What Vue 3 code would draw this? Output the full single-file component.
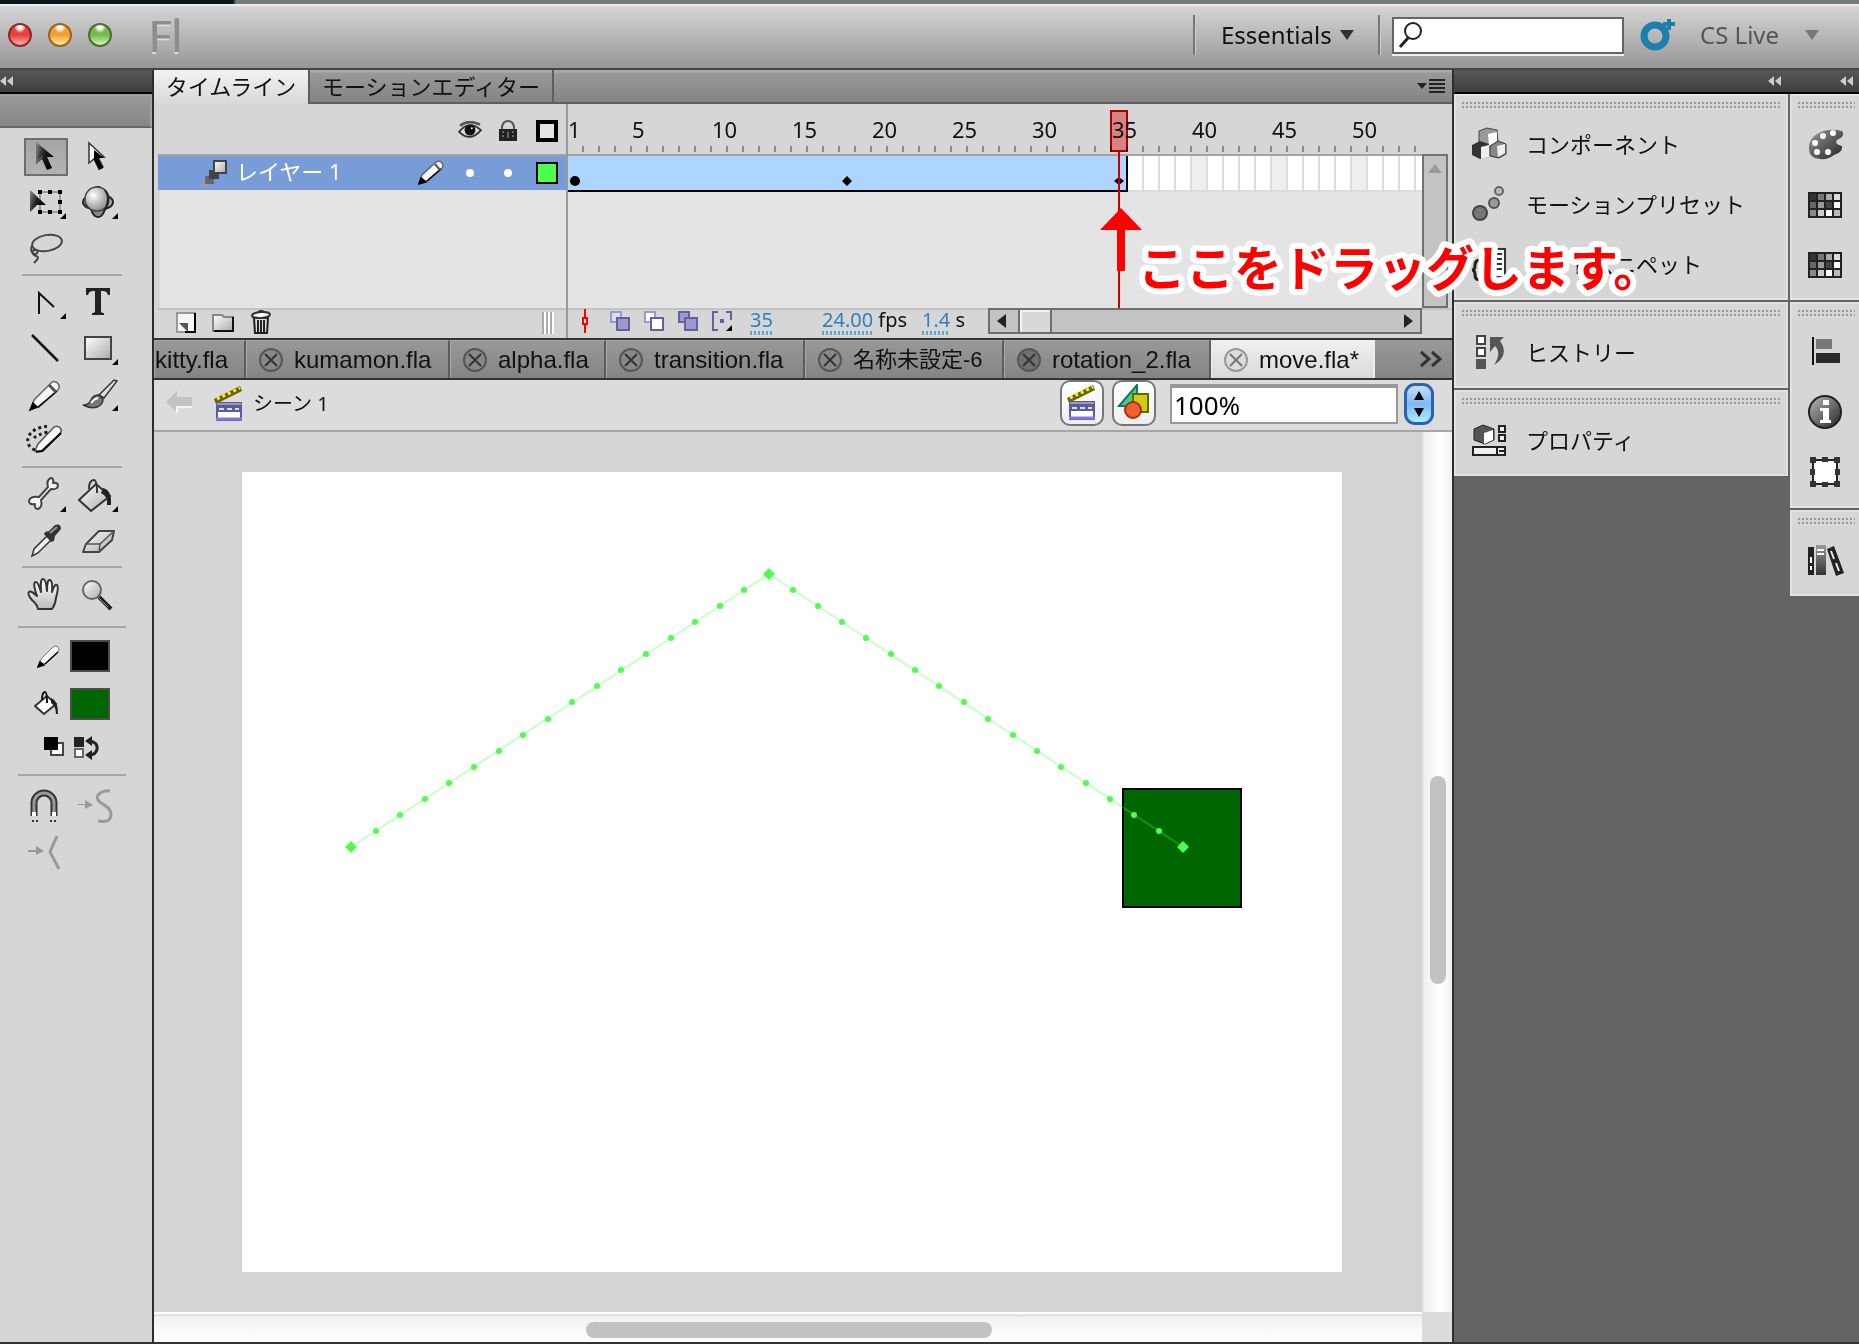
<script setup>
import { ref } from 'vue'

const zoom = ref('100%')
const query = ref('')

const flyout = (x, y) => `<path d="M${x + 6} ${y}v6h-6z" fill="#000"/>`

const toolGroups = [
  [
    { name: 'Selection', x: 24, y: 134, active: true, art: '<path d="M36 142v22l6-5 5 11 5-2-5-11h7z" fill="url(#arrowDark)"/><path d="M37 144v18l6-6" fill="none" stroke="#777"/>' },
    { name: 'Subselection', x: 76, y: 134, art: '<path d="M89 143v20l5-4 5 10 4-2-5-10h6z" fill="#fff" stroke="#333" stroke-width="1.5"/><path d="M94 150l10 8h-6l5 10-4 2-5-11z" fill="#000"/>' },
    { name: 'Free Transform', x: 24, y: 180, art: '<path d="M40 192h20v20H40z" fill="none" stroke="#999" stroke-width="2"/><path d="M38 190h4v4h-4zM48 190h4v4h-4zM58 190h4v4h-4zM58 200h4v4h-4zM58 210h4v4h-4zM48 210h4v4h-4zM38 210h4v4h-4z" fill="#000"/><path d="M30 190v22l7-7h9z" fill="url(#arrowDark)"/>' + flyout(60, 213) },
    { name: '3D Rotation', x: 76, y: 180, art: '<ellipse cx="98" cy="202" rx="8" ry="15" fill="#888" stroke="#222" stroke-width="2"/><ellipse cx="98" cy="202" rx="15" ry="8" fill="#aaa" stroke="#222" stroke-width="2"/><circle cx="97" cy="199" r="12" fill="url(#ball)" stroke="#444" stroke-width="1.5"/><path d="M105 190q6 8 0 20" fill="none" stroke="#222" stroke-width="2"/>' + flyout(112, 213) },
    { name: 'Lasso', x: 24, y: 226, art: '<ellipse cx="47" cy="243" rx="15" ry="8" transform="rotate(-10 47 243)" fill="none" stroke="#444" stroke-width="2"/><path d="M32 246c-2 4 0 8 3 8s4-4 0-4-3 5 1 6 1 4-2 7" fill="none" stroke="#444" stroke-width="2"/>' },
  ],
  [
    { name: 'Pen', x: 24, y: 280, art: '<path d="M39 314v-21l15 14" fill="none" stroke="#111" stroke-width="2"/>' + flyout(60, 313) },
    { name: 'Text', x: 76, y: 280, art: '<path d="M86 288h24v7h-2q-1-4-5-4h-2v20q0 2 3 2v2H92v-2q3 0 3-2v-20h-2q-4 0-5 4h-2z" fill="#222"/>' },
    { name: 'Line', x: 24, y: 326, art: '<path d="M32 335l26 26" stroke="#111" stroke-width="2.5"/>' },
    { name: 'Rectangle', x: 76, y: 326, art: '<path d="M85 337h26v22H85z" fill="url(#shine)" stroke="#444" stroke-width="2"/>' + flyout(112, 359) },
    { name: 'Pencil', x: 24, y: 372, art: '<path d="M31 409l3-9 18-18q4-2 7 3 1 3-2 6l-18 16z" fill="#f6f6f6" stroke="#666" stroke-width="1.5"/><path d="M30 410l3-7 4 4zM38 407l19-16" fill="#000" stroke="#000" stroke-width="1.5"/><path d="M49 385l7 7" stroke="#555" stroke-width="3"/>' },
    { name: 'Brush', x: 76, y: 372, art: '<path d="M99 395l15-15 3 1-13 17z" fill="#ddd" stroke="#333" stroke-width="1.5"/><path d="M83 405q6 0 8-5t8-5l4 4q0 6-6 8t-14-2z" fill="#777" stroke="#333" stroke-width="1.5"/><path d="M91 403q3-4 7-5" stroke="#fff" stroke-width="2" fill="none"/>' + flyout(112, 405) },
    { name: 'Deco', x: 24, y: 418, art: '<path d="M35 451l3-7 16-17q4-2 7 2 1 3-2 6l-16 16z" fill="#f6f6f6" stroke="#555" stroke-width="1.5"/><path d="M36 452l6-1 19-18" fill="none" stroke="#000" stroke-width="2"/><path d="M35 450a10 10 0 0 1-7-12q4-11 22-12M34 438q4-4 15-6" fill="none" stroke="#222" stroke-width="3" stroke-dasharray="3 3"/>' },
  ],
  [
    { name: 'Bone', x: 24, y: 471, art: '<path d="M39 496l9-10q-2-7 3-9 3 0 2 5 4-1 5 2 0 5-7 4L41 499q2 7-3 9-4 0-3-5-6 1-6-3 1-5 10-4z" fill="#f4f4f4" stroke="#444" stroke-width="2" stroke-linejoin="round"/>' + flyout(60, 505) },
    { name: 'Paint Bucket', x: 76, y: 471, art: '<path d="M79 499l17-16 14 12-19 15z" fill="url(#shine)" stroke="#333" stroke-width="2"/><path d="M89 488q0-9 5-9 3 0 3 13" fill="none" stroke="#333" stroke-width="2"/><path d="M103 487q9 2 8 17h-4q1-9-6-12z" fill="#222"/>' + flyout(112, 505) },
    { name: 'Eyedropper', x: 24, y: 517, art: '<path d="M32 555l2-7 13-13 4 4-13 13z" fill="#eee" stroke="#333" stroke-width="1.5"/><path d="M45 531l4-1 6-6q6-2 6 4l-6 7-1 5-3 1-7-8z" fill="#333"/><path d="M50 532l7-6" stroke="#999" stroke-width="2"/>' },
    { name: 'Eraser', x: 76, y: 517, art: '<path d="M83 551l3-8 13-13h15l-2 9-13 12z" fill="url(#shine)" stroke="#444" stroke-width="2" stroke-linejoin="round"/><path d="M86 543h14l13-12M100 543l-1 8" fill="none" stroke="#555" stroke-width="1.5"/>' },
  ],
  [
    { name: 'Hand', x: 24, y: 571, art: '<path d="M38 609q-1-5-6-9-5-6-3-8t8 4q-5-14-1-14 2 0 5 10-1-13 2-13t4 12q0-12 3-11t2 12q3-9 5-7t-1 13q-1 7-4 11z" fill="url(#hand)" stroke="#333" stroke-width="2" stroke-linejoin="round"/>' },
    { name: 'Zoom', x: 76, y: 571, art: '<circle cx="92" cy="590" r="9" fill="url(#shine)" stroke="#666" stroke-width="2"/><path d="M99 597l12 12" stroke="#222" stroke-width="4"/><path d="M99 598l9 9" stroke="#999" stroke-width="1"/>' },
  ],
]

const optionTools = [
  { name: 'Snap to Objects', x: 24, y: 784, art: '<path d="M34 816v-13a10 10 0 0 1 20 0v13" fill="none" stroke="#333" stroke-width="7"/><path d="M34 812v-9a10 10 0 0 1 20 0v9" fill="none" stroke="#999" stroke-width="3"/><path d="M34 812v4M54 812v4" stroke="#fff" stroke-width="4"/><path d="M32 820h2v2h-2zM36 820h2v2h-2zM50 820h2v2h-2zM54 820h2v2h-2z" fill="#333"/>' },
  { name: 'Smooth', x: 76, y: 784, art: '<path d="M78 804h7v-4l8 5-8 4v-4h-7z" fill="#999"/><path d="M110 791c-8-1-15 4-12 9s13 6 13 14-6 8-13 7" fill="none" stroke="#999" stroke-width="3"/>' },
  { name: 'Straighten', x: 24, y: 830, art: '<path d="M28 850h8v-4l8 5-8 4v-3h-8z" fill="#999"/><path d="M57 836l-7 16 9 17" fill="none" stroke="#999" stroke-width="3"/>' },
]

const frames = Array.from({ length: 54 }, (_, i) => i + 1)
const isLabelled = (n) => n === 1 || (n % 5 === 0 && n <= 50)
const emptyFrames = frames.filter((n) => n > 35)

const docs = [
  { title: 'kumamon.fla' },
  { title: 'alpha.fla' },
  { title: 'transition.fla' },
  { title: '名称未設定-6', cjk: true },
  { title: 'rotation_2.fla', dark: true },
  { title: 'move.fla*', active: true },
]

const start = [109, 375]
const apex = [527, 102]
const end = [941, 375]
const between = (a, b) =>
  Array.from({ length: 16 }, (_, i) => [
    Math.round(a[0] + ((b[0] - a[0]) * (i + 1)) / 17),
    Math.round(a[1] + ((b[1] - a[1]) * (i + 1)) / 17),
  ])
const pathDots = [...between(start, apex), ...between(apex, end)]

const swatchGrid = (() => {
  const shades = ['#333', '#777', '#aaa', '#ddd', '#666', '#999', '#444', '#fff', '#888', '#ccc', '#fff', '#bbb']
  return '<path d="M0 5h34v26H0z" fill="#222"/>' +
    shades.map((c, i) => `<path d="M${2 + (i % 4) * 8} ${7 + Math.floor(i / 4) * 8}h6v6h-6z" fill="${c}"/>`).join('')
})()

const panels = [
  [
    { label: 'コンポーネント', art: '<path d="M7 4l8-3 10 2 1 12-8 5-11-3z" fill="#999" stroke="#444"/><path d="M16 7l9-2v10l-8 4z" fill="#fff"/><path d="M0 18l8-4 9 3v13l-9 2-8-4z" fill="#333"/><path d="M9 20l8-2v12l-8 2z" fill="#eee"/><path d="M18 19l8-5 8 3v10l-7 4-9-2z" fill="#888" stroke="#333"/><path d="M25 19l8-2v9l-7 4z" fill="#eee"/>' },
    { label: 'モーションプリセット', art: '<circle cx="8" cy="26" r="7" fill="#777" stroke="#444" stroke-width="2"/><circle cx="22" cy="16" r="5" fill="#999" stroke="#555" stroke-width="2"/><circle cx="27" cy="4" r="4" fill="#bbb" stroke="#666" stroke-width="2"/>' },
    { label: 'コードスニペット', art: '<path d="M14 2h19v28H14z" fill="#fff" stroke="#333" stroke-width="2"/><path d="M18 7h12M18 12h12M18 17h12M18 22h12" stroke="#333" stroke-width="2"/><path d="M8 13q-5 0-5 5t-3 5q3 0 3 5t5 5" fill="none" stroke="#222" stroke-width="3"/>' },
  ],
  [
    { label: 'ヒストリー', art: '<path d="M5 1h8v8H5zM5 13h8v8H5z" fill="#fff" stroke="#444" stroke-width="2"/><path d="M4 24h10v10H4z" fill="#555"/><path d="M18 2h14l-4 4q10 14-6 24 8-12 1-19l-5 6z" fill="#555"/>' },
  ],
  [
    { label: 'プロパティ', art: '<path d="M2 6l9-4 11 4v11l-9 4-11-4z" fill="#555" stroke="#222"/><path d="M12 10l9-3v10l-9 4z" fill="#fff"/><path d="M27 3h6v6h-6zM27 12h6v6h-6zM1 24h32v8H1z" fill="#eee" stroke="#222" stroke-width="2"/><path d="M25 24v8M27 28h5" stroke="#222" stroke-width="2"/>' },
  ],
]

const dock = [
  [
    { label: 'Color', art: '<path d="M1 20C2 6 20 0 34 4q4 5-5 9-3 4 5 6 1 6-8 9-6 5-14 4Q0 31 1 20z" fill="url(#palette)"/><circle cx="25" cy="6" r="3" fill="#fff"/><circle cx="15" cy="9" r="3" fill="#fff"/><circle cx="7" cy="16" r="3" fill="#fff"/><circle cx="9" cy="25" r="3" fill="#fff"/><circle cx="20" cy="25" r="3" fill="#fff"/>' },
    { label: 'Swatches', art: swatchGrid },
    { label: 'Color sets', art: swatchGrid },
  ],
  [
    { label: 'Align', art: '<path d="M4 2h2v28H4z" fill="#111"/><path d="M8 4h16v10H8z" fill="#777"/><path d="M8 18h24v10H8z" fill="#2a2a2a"/>' },
    { label: 'Info', art: '<circle cx="17" cy="17" r="16" fill="url(#info)" stroke="#222" stroke-width="2"/><path d="M15 5h6v5h-6zM12 13h9v12h2v3H12v-3h3v-9h-3z" fill="#fff"/>' },
    { label: 'Transform', art: '<path d="M5 5h24v24H5z" fill="#fff" stroke="#222" stroke-width="2"/><path d="M2 2h6v6H2zM14 2h6v5h-6zM26 2h6v6h-6zM2 14h5v6H2zM27 14h5v6h-5zM2 26h6v6H2zM14 27h6v5h-6zM26 26h6v6h-6z" fill="#333"/>' },
  ],
  [
    { label: 'Library', art: '<path d="M0 4h6v28H0z" fill="#222"/><path d="M2 14h2v6H2zM2 23h2v4H2z" fill="#fff"/><path d="M8 2h10v30H8z" fill="url(#book)"/><path d="M9 6h7v2H9zM9 10h7v2H9z" fill="#fff"/><path d="M19 6l7-3 10 27-8 3z" fill="#222"/><path d="M23 8l3 8M28 20l3 8" stroke="#eee" stroke-width="2"/>' },
  ],
]

const pencil = '<path d="M1 23l3-8L18 2q4-2 6 1t0 5L9 21z" fill="#f6f6f6" stroke="#666" stroke-width="1.5"/><path d="M1 24l2-6 5 4zM9 21L23 9" fill="#000" stroke="#000" stroke-width="1.5"/><path d="M17 4l5 6" stroke="#555" stroke-width="2"/>'
const smallPencil = '<path d="M4 23l3-7L19 4q3-2 5 0t0 5L12 20z" fill="#f6f6f6" stroke="#777"/><path d="M4 24l2-5 4 3zM11 21L24 9" fill="#000" stroke="#000" stroke-width="1.5"/>'
const clapper = '<path d="M0 14L26 1l2 5L2 19z" fill="#6b6400"/><path d="M3 14L26 3" stroke="#ffee20" stroke-width="3" stroke-dasharray="3 3"/><path d="M3 18h24v17H3z" fill="#fff" stroke="#5a5aa0" stroke-width="2"/><path d="M3 17h24v10H3z" fill="#5c5c9c"/><path d="M3 19h24" stroke="#9a9ab0" stroke-width="2"/><path d="M5 24h5M13 24h5M21 24h4" stroke="#ddd" stroke-width="2"/><path d="M2 34h26" stroke="#7a7ae0" stroke-width="3"/>'
</script>

<template>
  <div class="app">
    <svg class="defs" aria-hidden="true">
      <defs>
        <linearGradient id="arrowDark" x1="0" y1="0" x2="1" y2="0.4"><stop offset="0" stop-color="#888" /><stop offset=".5" stop-color="#222" /><stop offset="1" stop-color="#000" /></linearGradient>
        <linearGradient id="palette" x1="0" y1="0" x2="1" y2="1"><stop offset="0" stop-color="#999" /><stop offset="1" stop-color="#222" /></linearGradient>
        <linearGradient id="shine" x1="0" y1="0" x2="1" y2="1"><stop offset="0" stop-color="#fff" /><stop offset="1" stop-color="#aaa" /></linearGradient>
        <linearGradient id="hand" x1="0" y1="0" x2="0" y2="1"><stop offset="0" stop-color="#fff" /><stop offset="1" stop-color="#bbb" /></linearGradient>
        <linearGradient id="book" x1="0" y1="0" x2="0" y2="1"><stop offset="0" stop-color="#999" /><stop offset="1" stop-color="#333" /></linearGradient>
        <linearGradient id="info" x1="0" y1="0" x2="1" y2="1"><stop offset="0" stop-color="#bbb" /><stop offset="1" stop-color="#222" /></linearGradient>
        <radialGradient id="ball" cx=".35" cy=".35" r=".7"><stop offset="0" stop-color="#fff" /><stop offset="1" stop-color="#888" /></radialGradient>
      </defs>
    </svg>

    <header class="titlebar">
      <div class="lights">
        <button class="light red" aria-label="Close"></button>
        <button class="light amber" aria-label="Minimize"></button>
        <button class="light green" aria-label="Zoom window"></button>
      </div>
      <span class="logo">Fl</span>
      <div class="title-tools">
        <button class="workspace">Essentials <i class="down"></i></button>
        <label class="search">
          <svg width="26" height="28" viewBox="0 0 26 28"><circle cx="15" cy="10" r="8" fill="none" stroke="#222" stroke-width="2" /><path d="M10 17l-8 9" stroke="#222" stroke-width="3" /></svg>
          <input v-model="query" type="text" aria-label="Search" />
        </label>
        <svg class="live-icon" width="36" height="34" viewBox="0 0 36 34"><circle cx="15" cy="18" r="11" fill="none" stroke="#1d80ac" stroke-width="7" /><path d="M29 1v11M23 6h12" stroke="#1d80ac" stroke-width="4" /></svg>
        <button class="live">CS Live <i class="down"></i></button>
      </div>
    </header>

    <div class="main">
      <aside class="toolbar">
        <div class="dark-head left"><svg width="14" height="10"><path d="M6 0v10L0 5zM13 0v10L7 5z" fill="#ccc" /></svg></div>
        <div class="tool-head"></div>
        <div v-for="(group, g) in toolGroups" :key="g" class="tools" :class="{ wide: g === 3 }">
          <button v-for="t in group" :key="t.name" class="tool" :class="{ active: t.active }" :aria-label="t.name">
            <svg width="44" height="46" :viewBox="`${t.x} ${t.y} 44 46`" v-html="t.art"></svg>
          </button>
        </div>
        <div class="colors">
          <div class="color-row">
            <svg width="26" height="26" viewBox="0 0 26 26" v-html="smallPencil"></svg>
            <button class="swatch black" aria-label="Stroke color"></button>
          </div>
          <div class="color-row">
            <svg width="26" height="26" viewBox="0 0 26 26"><path d="M1 15L13 5l9 8-12 10z" fill="#fff" stroke="#333" stroke-width="2" /><path d="M8 9q0-8 3-8 2 0 2 11" fill="none" stroke="#111" stroke-width="2" /><path d="M17 7q7 2 7 16h-2q0-8-5-11z" fill="#222" /></svg>
            <button class="swatch fill" aria-label="Fill color"></button>
          </div>
          <div class="color-row small">
            <svg width="22" height="24" viewBox="0 0 22 24"><path d="M7 7h12v12H7z" fill="#fff" stroke="#444" stroke-width="2" /><path d="M0 1h14v13H0z" fill="#000" /></svg>
            <svg width="26" height="24" viewBox="0 0 26 24"><path d="M0 1h10v10H0z" fill="#222" /><path d="M1 13h8v8H1z" fill="#fff" stroke="#666" stroke-width="2" /><path d="M15 5q9 1 8 8-1 6-8 6" fill="none" stroke="#222" stroke-width="3" /><path d="M11 5l7-5v10zM11 19l7-5v10z" fill="#222" /></svg>
          </div>
        </div>
        <div class="tools">
          <button v-for="t in optionTools" :key="t.name" class="tool" :aria-label="t.name">
            <svg width="44" height="46" :viewBox="`${t.x} ${t.y} 44 46`" v-html="t.art"></svg>
          </button>
        </div>
      </aside>

      <main class="center">
        <nav class="panel-tabs">
          <button class="panel-tab on">タイムライン</button>
          <button class="panel-tab">モーションエディター</button>
          <button class="panel-menu" aria-label="Panel menu"><svg width="28" height="18"><path d="M0 5h10l-5 6z" fill="#222" /><path d="M12 2h16M12 6h16M12 10h16M12 14h16" stroke="#222" stroke-width="2" /></svg></button>
        </nav>

        <section class="timeline">
          <div class="layers">
            <div class="layer-head">
              <svg width="24" height="20" viewBox="0 0 26 22"><path d="M1 12Q12-2 25 10 13 24 1 12z" fill="#ddd" stroke="#333" stroke-width="2" /><circle cx="13" cy="10" r="6" fill="#111" /><circle cx="15" cy="8" r="1" fill="#fff" /><path d="M2 5Q12-2 24 4" fill="none" stroke="#555" stroke-width="3" /></svg>
              <svg width="20" height="22" viewBox="0 0 20 22"><path d="M4 11V7q1-6 6-6t6 6v4" fill="none" stroke="#555" stroke-width="2" /><path d="M1 9h18v12H1z" fill="#222" /><path d="M10 12v6M4 12h2M14 12h2M4 16h2M14 16h2" stroke="#666" stroke-width="2" /></svg>
              <span class="outline-box"></span>
            </div>
            <div class="layer-row">
              <svg width="30" height="28" viewBox="0 0 30 28"><path d="M2 22h6v6H2z" fill="#99a" /><path d="M5 17h9v8H5z" fill="#667" /><path d="M9 11h10v9H9z" fill="#444" /><path d="M14 2h12v12H14z" fill="url(#shine)" stroke="#444" stroke-width="2" /></svg>
              <span class="layer-name">レイヤー 1</span>
              <svg width="26" height="26" viewBox="0 0 26 26" v-html="pencil"></svg>
              <span class="dot"></span>
              <span class="dot"></span>
              <span class="outline-box green-box"></span>
            </div>
            <div class="layer-space"></div>
            <div class="layer-foot">
              <button aria-label="New layer"><svg width="22" height="24" viewBox="0 0 22 24"><path d="M1 2h18v19H1z" fill="#f6f6f6" stroke="#999" stroke-width="2" /><path d="M19 2v19H9" fill="none" stroke="#000" stroke-width="2" /><path d="M3 12h9v9z" fill="#555" /></svg></button>
              <button aria-label="New folder"><svg width="24" height="24" viewBox="0 0 24 24"><path d="M1 4h9l2 2h9v14H1z" fill="url(#shine)" stroke="#888" stroke-width="2" /><path d="M2 20h19V6" fill="none" stroke="#111" stroke-width="2" /></svg></button>
              <button aria-label="Delete"><svg width="24" height="26" viewBox="0 0 24 26"><path d="M4 8h14l-1 15H5z" fill="#ddd" stroke="#222" stroke-width="2" /><path d="M8 10v12M11 10v12M14 10v12" stroke="#222" stroke-width="2" /><ellipse cx="11" cy="5" rx="9" ry="3" fill="#fff" stroke="#333" stroke-width="2" transform="rotate(-4 11 5)" /><path d="M8 3q2-4 6-1" fill="none" stroke="#333" stroke-width="2" /></svg></button>
              <span class="split-grip"></span>
            </div>
          </div>

          <div class="frames">
            <div class="ruler">
              <span v-for="n in frames" :key="n" class="tick"><template v-if="isLabelled(n)">{{ n }}</template></span>
            </div>
            <div class="frame-body">
              <div class="frame-area">
                <div class="frame-row">
                  <div class="span">
                    <svg width="560" height="32" viewBox="0 0 560 32"><circle cx="7" cy="25" r="5" /><path d="M274 25l5-5 5 5-5 5zM546 25l5-4 5 4-5 4z" /></svg>
                  </div>
                  <span v-for="n in emptyFrames" :key="n" class="cell" :class="{ fifth: n % 5 === 0 }"></span>
                </div>
              </div>
              <div class="vbar"><svg width="22" height="16"><path d="M11 2l7 9H4z" fill="#999" /></svg></div>
            </div>
            <div class="playhead"></div>
            <div class="needle"></div>
            <div class="frame-foot">
              <svg width="14" height="24" viewBox="0 0 14 24"><path d="M5 0v24" stroke="red" stroke-width="2" /><path d="M3 9h4v6H3z" fill="#fff" stroke="red" stroke-width="2" /></svg>
              <svg width="20" height="20"><path d="M1 1h10v10H1z" fill="#dde" stroke="#9a9acf" stroke-width="2" /><path d="M7 7h12v12H7z" fill="#9a9acf" stroke="#6262a0" stroke-width="2" /></svg>
              <svg width="20" height="20"><path d="M1 1h10v10H1z" fill="#fff" stroke="#9a9acf" stroke-width="2" /><path d="M7 7h12v12H7z" fill="#fff" stroke="#6262a0" stroke-width="2" /></svg>
              <svg width="20" height="20"><path d="M1 1h10v10H1z" fill="#9a9acf" stroke="#6262a0" stroke-width="2" /><path d="M7 7h12v12H7z" fill="#9a9acf" stroke="#6262a0" stroke-width="2" /></svg>
              <svg width="20" height="20"><path d="M6 1H1v18h5M14 1h5v8" fill="none" stroke="#6262a0" stroke-width="2" /><path d="M8 8h4v4H8z" fill="#6262a0" /><path d="M20 14v6h-6z" /></svg>
              <span><a href="#">35</a></span>
              <span><a href="#">24.00</a> fps</span>
              <span><a href="#">1.4</a> s</span>
              <div class="hbar">
                <svg width="22" height="22"><path d="M16 4v14L7 11z" fill="#222" /></svg>
                <span class="hthumb"></span>
                <svg class="end" width="22" height="22"><path d="M6 4v14l9-7z" fill="#222" /></svg>
              </div>
            </div>
          </div>
        </section>

        <nav class="docs">
          <button class="doc first"><span>kitty.fla</span></button>
          <button v-for="d in docs" :key="d.title" class="doc" :class="{ active: d.active, cjk: d.cjk }">
            <svg width="26" height="26" viewBox="0 0 26 26"><circle cx="13" cy="13" r="11" :fill="d.active ? '#ddd' : d.dark ? '#707070' : '#888'" :stroke="d.active ? '#999' : '#555'" stroke-width="2" /><path d="M7 7l12 12M19 7L7 19" :stroke="d.active ? '#777' : '#333'" stroke-width="2" /></svg>
            <span>{{ d.title }}</span>
          </button>
          <button class="more" aria-label="More documents"><svg width="24" height="18"><path d="M2 2l8 7-8 7M13 2l8 7-8 7" fill="none" stroke="#333" stroke-width="3" /></svg></button>
        </nav>

        <div class="scenebar">
          <svg width="28" height="24" viewBox="0 0 28 24"><path d="M0 11L11 0v6h15v9H11v6z" fill="#c2c2c2" /><path d="M11 22v-6h15" fill="none" stroke="#f4f4f4" stroke-width="2" /></svg>
          <svg class="clap" width="30" height="38" viewBox="0 0 30 38" v-html="clapper"></svg>
          <span class="scene-name">シーン 1</span>
          <button class="square-btn" aria-label="Edit scene"><svg width="30" height="38" viewBox="0 0 30 38" v-html="clapper"></svg></button>
          <button class="square-btn" aria-label="Edit symbols"><svg width="34" height="38" viewBox="0 0 34 38"><path d="M2 22L20 1v21z" fill="#3fcf8f" stroke="#157a55" stroke-width="2" /><path d="M16 10h15v18H16z" fill="#d0cc18" stroke="#6b6600" stroke-width="2" /><circle cx="16" cy="26" r="8" fill="#f06030" stroke="#a03010" stroke-width="2" /></svg></button>
          <input v-model="zoom" class="zoom" type="text" aria-label="Zoom level" />
          <button class="stepper" aria-label="Zoom presets"><svg width="12" height="26"><path d="M6 0l5 9H1zM6 26l5-9H1z" /></svg></button>
        </div>

        <div class="work">
          <div class="pasteboard">
            <svg class="stage" width="1100" height="800" viewBox="0 0 1100 800">
              <rect x="881" y="317" width="118" height="118" fill="#060" stroke="#000" stroke-width="2" />
              <polyline :points="[start, apex, end].join(' ')" fill="none" stroke="#4dff4d" stroke-opacity=".3" stroke-width="2" />
              <circle v-for="(p, i) in pathDots" :key="i" :cx="p[0]" :cy="p[1]" r="3" fill="#4cff4c" />
              <path v-for="(p, i) in [start, apex, end]" :key="'k' + i" :d="`M${p[0] - 6} ${p[1]}l6-6 6 6-6 6z`" fill="#4cff4c" />
            </svg>
          </div>
          <div class="vscroll"><span class="vknob"></span></div>
          <div class="hscroll"><span class="hknob"></span></div>
          <div class="corner"></div>
        </div>
      </main>

      <aside class="right">
        <div class="dark-head"><svg width="14" height="10"><path d="M6 0v10L0 5zM13 0v10L7 5z" fill="#ccc" /></svg></div>
        <div v-for="(p, i) in panels" :key="i" class="box">
          <div class="grip"></div>
          <button v-for="item in p" :key="item.label" class="item">
            <svg width="36" height="36" viewBox="0 -1 36 36" v-html="item.art"></svg>
            <span>{{ item.label }}</span>
          </button>
        </div>
      </aside>

      <aside class="strip">
        <div class="dark-head edge"><svg width="14" height="10"><path d="M6 0v10L0 5zM13 0v10L7 5z" fill="#ccc" /></svg></div>
        <div v-for="(p, i) in dock" :key="i" class="box">
          <div class="grip"></div>
          <button v-for="item in p" :key="item.label" class="item" :aria-label="item.label">
            <svg width="36" height="36" viewBox="0 -1 36 36" v-html="item.art"></svg>
          </button>
        </div>
      </aside>
    </div>

    <svg class="note" width="560" height="100" viewBox="0 0 560 100">
      <path d="M24 4l21 22H28v41h-8V26H3z" fill="red" />
      <text x="41" y="82">ここをドラッグします。</text>
    </svg>
  </div>
</template>

<style>
body {
  margin: 0;
  background: #646464;
}
</style>

<style scoped>
* {
  box-sizing: border-box;
}
.app {
  position: relative;
  display: flex;
  flex-direction: column;
  min-height: 100vh;
  overflow: hidden;
  border-bottom: 2px solid #333;
  background: #646464;
  color: #111;
  font: 22px/28px "Noto Sans", "Noto Sans CJK JP", sans-serif;
}
.defs {
  position: absolute;
  width: 0;
  height: 0;
}
button {
  padding: 0;
  border: 0;
  background: none;
  color: inherit;
  font: inherit;
}
svg {
  display: block;
  flex: none;
}
input {
  min-width: 0;
  padding: 0;
  border: 0;
  outline: 0;
  background: none;
  font: inherit;
}

.titlebar {
  display: flex;
  align-items: center;
  height: 70px;
  padding: 4px 0 2px 8px;
  border-bottom: 2px solid #444;
  background:
    linear-gradient(90deg, #0c1618 233px, #727b78 236px) 0 0 / 100% 4px no-repeat,
    linear-gradient(#efefef 5px, #d4d4d4 7px, #979797);
}
.lights {
  display: flex;
  gap: 16px;
}
.light {
  width: 24px;
  height: 24px;
  border: 2px solid;
  border-radius: 50%;
}
.red {
  border-color: #8c2a28;
  background: radial-gradient(circle at 50% 10%, #fff 0 2px, transparent 6px), linear-gradient(#e8403c 50%, #ffb0ac);
}
.amber {
  border-color: #98651c;
  background: radial-gradient(circle at 50% 10%, #fff 0 2px, transparent 6px), linear-gradient(#efa035 50%, #fff0a0);
}
.green {
  border-color: #46702c;
  background: radial-gradient(circle at 50% 10%, #fff 0 2px, transparent 6px), linear-gradient(#74bb4c 50%, #d8f5b8);
}
.logo {
  margin-left: 36px;
  color: #8d8d8d;
  font: 44px/44px "Open Sans", sans-serif;
  text-shadow: 1px 0 #8d8d8d, 0 2px 0 #ddd;
}
.title-tools {
  display: flex;
  align-items: center;
  margin-left: auto;
  font-size: 24px;
}
.workspace {
  display: flex;
  align-items: center;
  gap: 8px;
  width: 187px;
  height: 40px;
  padding-left: 26px;
  border: solid #777;
  border-width: 0 2px;
  box-shadow: 1px 0 #ccc, inset 1px 0 #ccc;
}
.down {
  border: 7px solid transparent;
  border-top: 10px solid #333;
  border-bottom: 0;
}
.search {
  display: flex;
  align-items: center;
  width: 232px;
  height: 37px;
  margin: 0 16px 0 12px;
  padding-left: 4px;
  border: 2px solid #666;
  background: #fff;
  box-shadow: 0 2px #eee;
}
.search input {
  flex: 1;
}
.live-icon {
  margin-right: 24px;
}
.live {
  display: flex;
  align-items: center;
  width: 159px;
  gap: 26px;
  color: #555;
  white-space: nowrap;
}
.live .down {
  border-top-color: #777;
}

.main {
  flex: 1;
  display: grid;
  grid-template-columns: 154px minmax(0, 1fr) 336px 71px;
}
.dark-head {
  display: flex;
  align-items: center;
  justify-content: flex-end;
  height: 24px;
  padding-right: 6px;
  border-bottom: 2px solid #000;
  background: linear-gradient(#585858, #3e3e3e);
}
.dark-head.left {
  justify-content: flex-start;
}
.dark-head.edge {
  padding-right: 5px;
}
.toolbar {
  border-right: 2px solid #2c2c2c;
  background: #d6d6d6;
}
.tool-head {
  height: 34px;
  border: 2px solid #a2a2a2;
  border-left: 0;
  border-bottom-color: #666;
  background: linear-gradient(#999, #868686);
}
.tools {
  display: grid;
  grid-template-columns: 44px 44px;
  column-gap: 8px;
  margin: 0 30px 0 22px;
  padding: 4px 2px 2px;
  border-bottom: 2px solid #a8a8a8;
}
.tool-head + .tools {
  padding-top: 6px;
}
.tools.wide {
  margin: 0 26px 0 18px;
  padding: 3px 6px 9px;
}
.tools:last-child {
  margin-top: 4px;
  border-bottom: 0;
}
.tool {
  height: 46px;
}
.tool.active {
  background: linear-gradient(#a5a5a5, #b3b3b3) 2px 6px / 40px 34px no-repeat, linear-gradient(#6e6e6e, #6e6e6e) 0 4px / 44px 38px no-repeat;
}
.colors {
  margin: 0 26px 0 18px;
  padding: 12px 0 14px;
  border-bottom: 2px solid #a8a8a8;
}
.color-row {
  display: flex;
  align-items: center;
  gap: 10px;
  height: 32px;
  margin-bottom: 16px;
  padding-left: 16px;
}
.color-row.small {
  gap: 8px;
  height: 24px;
  margin: 0;
  padding-left: 26px;
}
.swatch {
  width: 40px;
  height: 32px;
  border: 2px solid #4c4c4c;
}
.black {
  background: #000;
}
.fill {
  background: #060;
}

.center {
  display: flex;
  flex-direction: column;
  min-width: 0;
  background: #d6d6d6;
}
.panel-tabs {
  display: flex;
  height: 34px;
  background: linear-gradient(#aaa 2px, #999 3px, #848484 32px, #5e5e5e 32px);
}
.panel-tab {
  width: 244px;
  padding-bottom: 2px;
  border-right: 2px solid #5e5e5e;
  text-align: center;
}
.panel-tab.on {
  width: 156px;
  background: linear-gradient(#f2f2f2, #d8d8d8);
}
.panel-menu {
  margin: 0 7px 0 auto;
}
.timeline {
  display: flex;
  height: 236px;
  border-bottom: 2px solid #333;
}
.layers {
  display: flex;
  flex-direction: column;
  width: 412px;
  padding-left: 4px;
}
.layer-head {
  display: flex;
  align-items: center;
  justify-content: flex-end;
  gap: 16px;
  height: 52px;
  padding: 4px 8px 0 0;
  border-bottom: 2px solid #a2a2a2;
}
.outline-box {
  width: 22px;
  height: 22px;
  margin-left: 2px;
  border: 4px solid #000;
  background: #e4e4e4;
}
.layer-row {
  display: flex;
  align-items: center;
  height: 34px;
  padding: 0 8px 0 42px;
  background: #779cd8;
  color: #fff;
}
.layer-name {
  flex: 1;
  padding: 0 0 4px 6px;
}
.dot {
  width: 8px;
  height: 8px;
  margin-left: 22px;
  border-radius: 50%;
  background: #fff;
}
.dot + .dot {
  margin: 0 22px 0 30px;
}
.green-box {
  border-width: 2px;
  background: #4cff4c;
}
.layer-space {
  flex: 1;
  margin-left: 2px;
  background: #e4e4e4;
}
.layer-foot {
  display: flex;
  align-items: center;
  gap: 14px;
  height: 30px;
  padding: 0 12px 2px 18px;
  border-top: 2px solid #c2c2c2;
}
.split-grip {
  width: 12px;
  height: 22px;
  margin-left: auto;
  background: repeating-linear-gradient(90deg, #aaa 0 2px, #fff 2px 4px);
}
.frames {
  position: relative;
  flex: 1;
  min-width: 0;
  border-left: 2px solid #999;
}
.ruler {
  display: flex;
  height: 52px;
  margin-right: 30px;
  overflow: hidden;
  border-bottom: 2px solid #a2a2a2;
  background: repeating-linear-gradient(90deg, transparent 0 14px, #888 14px 16px) 0 42px / 100% 6px no-repeat;
}
.tick {
  flex: none;
  width: 16px;
  padding-top: 11px;
}
.frame-body {
  display: flex;
  height: 152px;
  padding-right: 4px;
}
.frame-area {
  flex: 1;
  min-width: 0;
  background: #e4e4e4;
}
.frame-row {
  display: flex;
  height: 36px;
  overflow: hidden;
}
.span {
  flex: none;
  width: 560px;
  border: solid #000;
  border-width: 0 2px 2px 0;
  background: #acd6ff;
}
.cell {
  flex: none;
  width: 16px;
  height: 36px;
  border: solid #dcdcdc;
  border-width: 0 2px 2px 0;
  background: #fff;
}
.cell.fifth {
  background: #eee;
}
.vbar {
  width: 26px;
  margin-top: -2px;
  padding-top: 6px;
  border: 2px solid #707070;
  background: #c3c3c3;
}
.playhead {
  position: absolute;
  top: 6px;
  left: 542px;
  width: 18px;
  height: 42px;
  border: 2px solid #c00;
  background: #ff9c9c;
  mix-blend-mode: multiply;
}
.needle {
  position: absolute;
  top: 48px;
  left: 550px;
  width: 2px;
  height: 156px;
  background: #c00;
}
.frame-foot {
  display: grid;
  grid-template-columns: 30px 34px 34px 34px 38px 72px 100px 66px minmax(0, 1fr);
  align-items: center;
  height: 26px;
  padding: 0 30px 0 12px;
  background: linear-gradient(#c2c2c2 2px, transparent 2px);
  font-size: 20px;
  line-height: 22px;
  white-space: nowrap;
}
.frame-foot span {
  padding-bottom: 2px;
}
.frame-foot a {
  padding-bottom: 2px;
  background: repeating-linear-gradient(90deg, #60a4d4 0 2px, transparent 2px 4px) 0 100% / 100% 4px no-repeat;
  color: #2f80c2;
  text-decoration: none;
}
.hbar {
  display: flex;
  align-items: center;
  height: 26px;
  border: 2px solid #6e6e6e;
  background: #c3c3c3;
}
.hbar .hthumb {
  width: 34px;
  height: 22px;
  margin-left: 6px;
  border: 2px solid #6e6e6e;
  border-width: 0 2px;
  background: #d8d8d8;
  box-shadow: inset 2px 2px #f2f2f2;
}
.end {
  margin-left: auto;
}

.docs {
  display: grid;
  grid-template-columns: 92px 204px 156px 199px 199px 207px 164px 1fr;
  height: 40px;
  border-bottom: 2px solid #333;
  background: linear-gradient(#999, #848484);
  font: 24px/30px "Liberation Sans", "Noto Sans CJK JP", sans-serif;
}
.doc {
  display: flex;
  align-items: center;
  gap: 10px;
  min-width: 0;
  padding-left: 11px;
  overflow: hidden;
  border: solid #a8a8a8;
  border-width: 1px 0 0 1px;
  border-right: 2px solid #5c5c5c;
  white-space: nowrap;
}
.doc.cjk {
  font-size: 22px;
}
.doc.first {
  justify-content: flex-end;
  padding: 0 16px 0 0;
}
.doc.active {
  border-color: #eee;
  background: linear-gradient(#f0f0f0, #d8d8d8);
}
.more {
  margin: 0 9px 0 auto;
}

.scenebar {
  display: flex;
  align-items: center;
  height: 52px;
  padding: 0 18px 4px 12px;
  border-bottom: 2px solid #a6a6a6;
  background: #dcdcdc;
}
.clap {
  margin: 2px 9px 0 20px;
}
.scene-name {
  flex: 1;
  padding-top: 2px;
  font-size: 20px;
}
.square-btn {
  display: grid;
  place-items: center;
  width: 44px;
  height: 46px;
  margin-right: 8px;
  border: 2px solid #777;
  border-radius: 10px;
  background: linear-gradient(#fff, #eee);
}
.zoom {
  width: 228px;
  height: 40px;
  margin: 2px 6px 0;
  padding-left: 2px;
  border: 2px solid #999;
  border-top-width: 4px;
  background: #fff;
  font-size: 26px;
  line-height: 34px;
}
.stepper {
  display: grid;
  place-items: center;
  width: 30px;
  height: 42px;
  margin-top: 2px;
  border: 3px solid #2a62b4;
  border-radius: 11px;
  background: linear-gradient(#c8defa, #7fb8f4 50%, #a8f0ff);
}

.work {
  flex: 1;
  display: grid;
  grid-template: 1fr 30px / minmax(0, 1fr) 30px;
}
.pasteboard {
  min-height: 880px;
  padding: 40px 80px 40px 88px;
  overflow: hidden;
  background: #d4d4d4;
}
.stage {
  background: #fff;
}
.vscroll {
  display: flex;
  flex-direction: column;
  padding: 344px 6px 0;
  border-left: 2px solid #e4e4e4;
  background: linear-gradient(90deg, #f0f0f0, #fff 60%, #f2f2f2);
}
.vknob {
  width: 16px;
  height: 208px;
  border-radius: 8px;
  background: #c2c2c2;
}
.hscroll {
  padding: 8px 0 0 432px;
  border-top: 2px solid #fff;
  background: linear-gradient(#e2e2e2 2px, #f2f2f2 3px, #fff);
}
.hknob {
  display: block;
  width: 406px;
  height: 16px;
  border-radius: 8px;
  background: #c2c2c2;
}
.corner {
  background: #dcdcdc;
}

.right {
  border-left: 2px solid #2e2e2e;
}
.box {
  margin-bottom: 2px;
  padding: 6px 6px 4px;
  border: 2px solid #e2e2e2;
  background: #d6d6d6;
}
.strip .box {
  margin-left: 2px;
  padding-right: 4px;
  border-right: 0;
}
.grip {
  height: 6px;
  margin-bottom: 6px;
  background:
    linear-gradient(#d6d6d6, #d6d6d6) 0 2px / 100% 2px no-repeat,
    repeating-linear-gradient(90deg, #999 0 2px, transparent 2px 4px);
}
.item {
  display: flex;
  align-items: center;
  gap: 18px;
  width: 100%;
  height: 60px;
  padding-left: 10px;
  white-space: nowrap;
}
.note {
  position: absolute;
  top: 204px;
  left: 1097px;
  pointer-events: none;
}
.note text {
  fill: red;
  stroke: #fff;
  stroke-width: 12px;
  stroke-linejoin: round;
  paint-order: stroke;
  font: bold 48px "Noto Sans CJK JP", sans-serif;
}
</style>
